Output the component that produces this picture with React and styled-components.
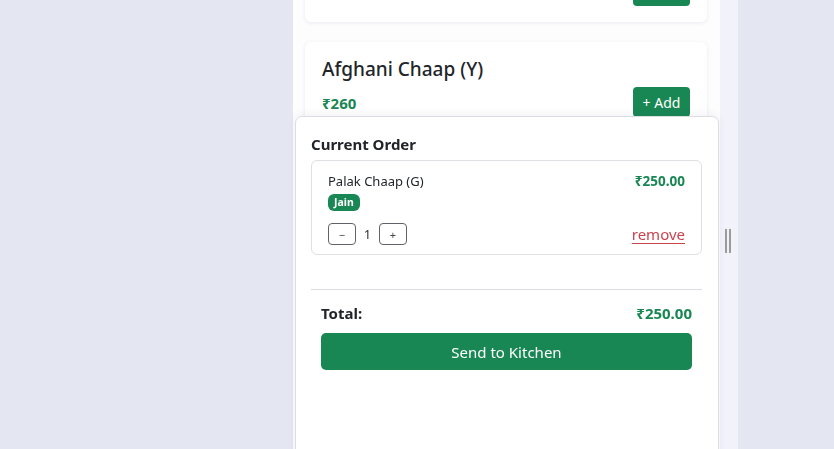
import React, { useEffect, useRef } from "react";
import styled, { createGlobalStyle } from "styled-components";

const Global = createGlobalStyle`
  html, body { margin: 0; padding: 0; height: 100%; overflow: hidden; }
  body {
    background: #e4e6f2;
    font-family: "Segoe UI", "Noto Sans", "Open Sans", sans-serif;
    color: #212529;
  }
  * { box-sizing: border-box; }
`;

const Page = styled.div`
  height: 449px;
  display: flex;
  justify-content: flex-start;
  padding-left: 293px;
`;

const Column = styled.div`
  width: 427px;
  height: 449px;
  background: #fdfdfe;
  overflow-y: auto;
  scrollbar-width: none;
  &::-webkit-scrollbar { display: none; }
`;

const Strip = styled.div`
  width: 18px;
  height: 449px;
  background: #f1f2fa;
  display: flex;
  align-items: flex-start;
  justify-content: center;
  padding-top: 229px;
`;

const Grip = styled.div`
  width: 6px;
  height: 24px;
  border-left: 2px solid #9a9a9a;
  border-right: 2px solid #9a9a9a;
  margin-right: 2px;
`;

const List = styled.div`
  display: flex;
  flex-direction: column;
  gap: 20px;
  padding: 12px 13px 400px 12px;
`;

const Card = styled.div`
  background: #fff;
  border-radius: 6px;
  box-shadow: 0 1px 4px rgba(30, 40, 80, 0.09);
  padding: 14px 17px 16px 17px;
  display: flex;
  flex-direction: column;
`;

const DishName = styled.div`
  font-size: 19px;
  font-weight: 500;
  line-height: 26px;
  color: #212529;
`;

const CardRow = styled.div`
  display: flex;
  justify-content: space-between;
  align-items: flex-end;
  margin-top: 5px;
`;

const Price = styled.div`
  font-size: 15px;
  font-weight: 700;
  color: #198754;
  padding-bottom: 4px;
`;

const AddButton = styled.button`
  background: #198754;
  color: #fff;
  border: none;
  border-radius: 4px;
  height: 30px;
  width: 57px;
  font-family: inherit;
  font-size: 14px;
  padding: 0;
`;

const Panel = styled.div`
  position: fixed;
  left: 295px;
  top: 116px;
  width: 424px;
  height: 360px;
  background: #fff;
  border: 1px solid #dcdde3;
  border-radius: 7px 7px 0 0;
  box-shadow: 0 -2px 8px rgba(30, 40, 80, 0.06);
  padding: 16px 16px 16px 15px;
`;

const PanelTitle = styled.div`
  font-size: 15px;
  font-weight: 700;
  line-height: 22px;
  margin-bottom: 5px;
`;

const ItemCard = styled.div`
  border: 1px solid #dfe0e4;
  border-radius: 6px;
  padding: 11px 16px 9px 16px;
  display: flex;
  flex-direction: column;
`;

const ItemTop = styled.div`
  display: flex;
  justify-content: space-between;
  align-items: center;
`;

const ItemName = styled.div`
  font-size: 13px;
  line-height: 18px;
`;

const ItemPrice = styled.div`
  font-size: 13.5px;
  font-weight: 700;
  color: #198754;
`;

const Badge = styled.span`
  align-self: flex-start;
  background: #198754;
  color: #fff;
  font-size: 10.5px;
  font-weight: 700;
  border-radius: 6px;
  padding: 0 6px;
  height: 17px;
  line-height: 17px;
  margin-top: 4px;
`;

const ItemBottom = styled.div`
  display: flex;
  justify-content: space-between;
  align-items: center;
  margin-top: 12px;
`;

const Qty = styled.div`
  display: flex;
  align-items: center;
`;

const QtyButton = styled.button`
  width: 28px;
  height: 22px;
  border: 1px solid #5f6368;
  border-radius: 4px;
  background: #fff;
  color: #444;
  font-family: inherit;
  font-size: 11px;
  padding: 0;
  line-height: 1;
`;

const QtyValue = styled.span`
  width: 23px;
  text-align: center;
  font-size: 13px;
  color: #333;
`;

const Remove = styled.a`
  font-size: 15px;
  color: #c9434f;
  text-decoration: underline;
  text-underline-offset: 3px;
  text-decoration-thickness: 1px;
  cursor: pointer;
`;

const Divider = styled.hr`
  border: none;
  border-top: 1px solid #dcdde3;
  margin: 34px 0 0 0;
`;

const Summary = styled.div`
  padding: 0 10px;
`;

const TotalRow = styled.div`
  display: flex;
  justify-content: space-between;
  align-items: center;
  margin-top: 12px;
  line-height: 22px;
  font-size: 15px;
  font-weight: 700;
`;

const TotalValue = styled.span`
  color: #198754;
`;

const SendButton = styled.button`
  width: 100%;
  height: 37px;
  margin-top: 9px;
  background: #198754;
  color: #fff;
  border: none;
  border-radius: 5px;
  font-family: inherit;
  font-size: 15px;
`;

const dishes = [
  { name: "Palak Chaap (G)", price: 250 },
  { name: "Afghani Chaap (Y)", price: 260 },
  { name: "Malai Chaap (W)", price: 270 },
];

export default function App() {
  const colRef = useRef(null);
  useEffect(() => {
    if (colRef.current) colRef.current.scrollTop = 81;
  }, []);
  return (
    <>
      <Global />
      <Page>
        <Column ref={colRef}>
          <List>
            {dishes.map((d) => (
              <Card key={d.name}>
                <DishName>{d.name}</DishName>
                <CardRow>
                  <Price>₹{d.price}</Price>
                  <AddButton>+ Add</AddButton>
                </CardRow>
              </Card>
            ))}
          </List>
        </Column>
        <Strip>
          <Grip />
        </Strip>
      </Page>
      <Panel>
        <PanelTitle>Current Order</PanelTitle>
        <ItemCard>
          <ItemTop>
            <ItemName>Palak Chaap (G)</ItemName>
            <ItemPrice>₹250.00</ItemPrice>
          </ItemTop>
          <Badge>Jain</Badge>
          <ItemBottom>
            <Qty>
              <QtyButton>−</QtyButton>
              <QtyValue>1</QtyValue>
              <QtyButton>+</QtyButton>
            </Qty>
            <Remove>remove</Remove>
          </ItemBottom>
        </ItemCard>
        <Divider />
        <Summary>
          <TotalRow>
            <span>Total:</span>
            <TotalValue>₹250.00</TotalValue>
          </TotalRow>
          <SendButton>Send to Kitchen</SendButton>
        </Summary>
      </Panel>
    </>
  );
}
